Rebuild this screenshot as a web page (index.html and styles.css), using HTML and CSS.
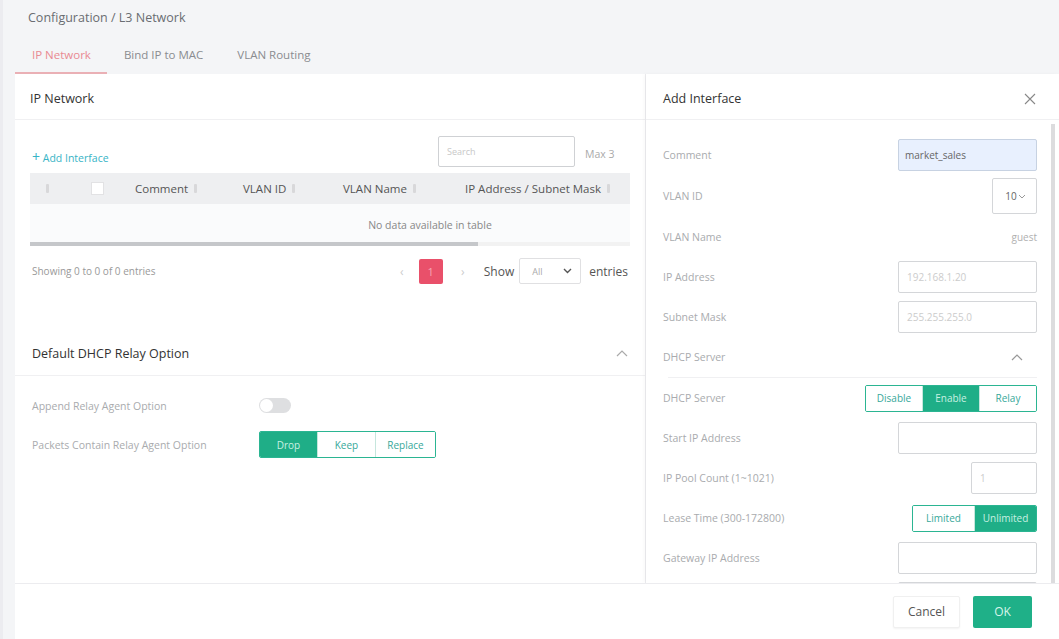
FILE: index.html
```html
<!DOCTYPE html>
<html lang="en">
<head>
    <meta charset="UTF-8">
    <title>Configuration / L3 Network</title>
    <link rel="stylesheet" href="styles.css">
</head>
<body>
    <div class="page">
        <div class="top">
            <div class="crumb">Configuration / L3 Network</div>
            <div class="tabs">
                <span class="tab active">IP Network</span>
                <span class="tab">Bind IP to MAC</span>
                <span class="tab">VLAN Routing</span>
            </div>
        </div>

        <div class="main">
            <div class="card">
                <div class="card-head">IP Network</div>
                <div class="card-body">
                    <div class="toolbar">
                        <a class="add-link"><b>+</b> Add Interface</a>
                        <div class="search-wrap">
                            <input class="search" type="text" placeholder="Search">
                            <span class="max">Max 3</span>
                        </div>
                    </div>

                    <div class="table">
                        <div class="thead">
                            <span class="th th-sort"><i class="sort"></i></span>
                            <span class="th th-check"><i class="check"></i></span>
                            <span class="th th-comment">Comment <i class="sort"></i></span>
                            <span class="th th-id">VLAN ID <i class="sort"></i></span>
                            <span class="th th-name">VLAN Name <i class="sort"></i></span>
                            <span class="th th-ip">IP Address / Subnet Mask <i class="sort"></i></span>
                        </div>
                        <div class="empty">No data available in table</div>
                        <div class="hscroll"><div class="hthumb"></div></div>
                    </div>

                    <div class="table-foot">
                        <span class="info">Showing 0 to 0 of 0 entries</span>
                        <div class="pager">
                            <span class="arrow">‹</span>
                            <span class="page-num">1</span>
                            <span class="arrow next">›</span>
                            <span class="show">Show</span>
                            <span class="select">All <svg width="9" height="6" viewBox="0 0 9 6"><path d="M1 1l3.5 3.5L8 1" fill="none" stroke="#555" stroke-width="1.4"/></svg></span>
                            <span class="show entries">entries</span>
                        </div>
                    </div>
                </div>

                <div class="section-head">
                    <span>Default DHCP Relay Option</span>
                    <svg width="12" height="8" viewBox="0 0 12 8"><path d="M1 7l5-5 5 5" fill="none" stroke="#aaa" stroke-width="1.2"/></svg>
                </div>
                <div class="relay">
                    <div class="relay-row">
                        <span class="lbl">Append Relay Agent Option</span>
                        <span class="toggle"><i></i></span>
                    </div>
                    <div class="relay-row">
                        <span class="lbl">Packets Contain Relay Agent Option</span>
                        <div class="seg seg-wide">
                            <span class="on">Drop</span>
                            <span>Keep</span>
                            <span>Replace</span>
                        </div>
                    </div>
                </div>
            </div>

            <div class="drawer">
                <div class="drawer-head">
                    <span>Add Interface</span>
                    <svg width="12" height="12" viewBox="0 0 12 12"><path d="M1 1l10 10M11 1L1 11" stroke="#888" stroke-width="1.1"/></svg>
                </div>
                <div class="drawer-body">
                    <div class="form">
                        <div class="row">
                            <span class="lbl">Comment</span>
                            <span class="field filled">market_sales</span>
                        </div>
                        <div class="row row-tall">
                            <span class="lbl">VLAN ID</span>
                            <span class="field vlan">10 <svg width="8" height="5" viewBox="0 0 8 5"><path d="M1 1l3 3 3-3" fill="none" stroke="#999" stroke-width="1"/></svg></span>
                        </div>
                        <div class="row">
                            <span class="lbl">VLAN Name</span>
                            <span class="plain">guest</span>
                        </div>
                        <div class="row">
                            <span class="lbl">IP Address</span>
                            <span class="field ph">192.168.1.20</span>
                        </div>
                        <div class="row">
                            <span class="lbl">Subnet Mask</span>
                            <span class="field ph">255.255.255.0</span>
                        </div>
                        <div class="row sub-head">
                            <span class="lbl">DHCP Server</span>
                            <svg width="12" height="8" viewBox="0 0 12 8"><path d="M1 7l5-5 5 5" fill="none" stroke="#999" stroke-width="1.2"/></svg>
                        </div>
                        <div class="row">
                            <span class="lbl">DHCP Server</span>
                            <div class="seg seg-dhcp">
                                <span>Disable</span>
                                <span class="on">Enable</span>
                                <span>Relay</span>
                            </div>
                        </div>
                        <div class="row">
                            <span class="lbl">Start IP Address</span>
                            <span class="field"></span>
                        </div>
                        <div class="row">
                            <span class="lbl">IP Pool Count (1~1021)</span>
                            <span class="field small ph">1</span>
                        </div>
                        <div class="row">
                            <span class="lbl">Lease Time (300-172800)</span>
                            <div class="seg seg-lease">
                                <span>Limited</span>
                                <span class="on">Unlimited</span>
                            </div>
                        </div>
                        <div class="row">
                            <span class="lbl">Gateway IP Address</span>
                            <span class="field"></span>
                        </div>
                        <div class="row">
                            <span></span>
                            <span class="field"></span>
                        </div>
                    </div>
                    <div class="vscroll"></div>
                </div>
            </div>
        </div>

        <div class="footer">
            <button class="btn cancel">Cancel</button>
            <button class="btn ok">OK</button>
        </div>
    </div>
</body>
</html>
```

FILE: styles.css
```css
body {
    margin: 0;
    background-color: #f4f5f7;
    font-family: "Open Sans", "Noto Sans", Arial, sans-serif;
    color: #333;
    width: 1059px;
    height: 639px;
    overflow: hidden;
}
.page {
    padding-left: 15px;
    box-shadow: inset 3px 0 0 #ececf0;
    box-sizing: border-box;
    height: 639px;
    display: flex;
    flex-direction: column;
}
.top {
    height: 74px;
    box-sizing: border-box;
    padding-top: 9px;
}
.crumb {
    font-size: 12.5px;
    line-height: 17px;
    color: #6a6d72;
    padding-left: 13px;
}
.tabs {
    display: flex;
    margin-top: 21px;
}
.tab {
    font-size: 11.5px;
    line-height: 16px;
    color: #8a8c90;
    padding: 0 17px;
    height: 25px;
}
.tab.active {
    color: #e98a92;
    border-bottom: 2px solid #eab0b5;
    padding-left: 17px;
    padding-right: 16px;
}

.main {
    flex: 1;
    display: flex;
    min-height: 0;
}
.card {
    width: 630px;
    background-color: #fff;
    border-right: 1px solid #ececef;
}
.card-head {
    height: 46px;
    box-sizing: border-box;
    padding: 16px 15px 0;
    font-size: 12.5px;
    color: #333;
    border-bottom: 1px solid #f0f0f2;
}
.card-body {
    padding: 15px 15px 0;
}
.toolbar {
    display: flex;
    justify-content: space-between;
    align-items: center;
    height: 32px;
}
.add-link {
    font-size: 10.5px;
    color: #37b4c6;
    padding-left: 2px;
    padding-top: 10px;
}
.add-link b {
    font-weight: normal;
    font-size: 14px;
}
.search-wrap {
    display: flex;
    align-items: center;
}
.search {
    width: 137px;
    height: 31px;
    box-sizing: border-box;
    border: 1px solid #cfd1d4;
    border-radius: 2px;
    font-size: 9px;
    padding: 0 8px;
    font-family: inherit;
}
.search::placeholder { color: #c8c8c8; }
.max {
    font-size: 10.5px;
    color: #aaa;
    margin-left: 10px;
    width: 45px;
    padding-top: 6px;
}
.table {
    margin-top: 6px;
}
.thead {
    display: flex;
    align-items: center;
    height: 31px;
    background-color: #eeeff1;
    font-size: 11.5px;
    color: #555;
}
.th {
    display: flex;
    align-items: center;
    gap: 6px;
}
.th-sort { width: 57px; padding-left: 16px; box-sizing: border-box; }
.th-check { width: 48px; }
.th-comment { width: 108px; }
.th-id { width: 100px; }
.th-name { width: 122px; }
.sort {
    display: inline-block;
    width: 3px;
    height: 9px;
    background-color: #d8d8da;
    border-radius: 1px;
}
.check {
    display: inline-block;
    width: 11px;
    height: 11px;
    background-color: #fff;
    border: 1px solid #e2e2e4;
    margin-left: 4px;
}
.empty {
    height: 38px;
    line-height: 42px;
    background-color: #fafbfc;
    text-align: center;
    font-size: 10.5px;
    color: #888;
    padding-left: 200px;
    box-sizing: border-box;
}
.hscroll {
    height: 4px;
    background-color: #f2f2f2;
}
.hthumb {
    width: 448px;
    height: 4px;
    background-color: #c5c7ca;
}
.table-foot {
    display: flex;
    justify-content: space-between;
    align-items: center;
    margin-top: 12px;
    height: 26px;
}
.info {
    font-size: 10px;
    color: #999;
    padding-left: 2px;
}
.pager {
    display: flex;
    align-items: center;
    font-size: 12px;
    color: #666;
    padding-right: 2px;
}
.arrow {
    color: #ccc;
    width: 20px;
    text-align: center;
    font-size: 12px;
}
.arrow.next { margin-left: 10px; }
.page-num {
    width: 24px;
    height: 25px;
    line-height: 25px;
    text-align: center;
    background-color: #e9506a;
    color: #f7a6b4;
    border-radius: 2px;
    margin-left: 7px;
    font-size: 11px;
}
.show { color: #555; margin-left: 11px; }
.select {
    width: 62px;
    height: 26px;
    box-sizing: border-box;
    border: 1px solid #e0e0e2;
    border-radius: 2px;
    margin-left: 5px;
    display: flex;
    align-items: center;
    justify-content: space-between;
    padding: 0 8px 0 12px;
    color: #aaa;
    font-size: 9px;
}
.show.entries { margin-left: 8px; }
.section-head {
    margin-top: 47px;
    height: 45px;
    box-sizing: border-box;
    border-bottom: 1px solid #f0f0f2;
    display: flex;
    justify-content: space-between;
    align-items: center;
    padding: 0 17px;
    font-size: 12.5px;
    color: #333;
}
.relay {
    padding: 10px 17px 0;
}
.relay-row {
    display: flex;
    align-items: center;
    height: 39px;
}
.relay-row .lbl {
    width: 227px;
}
.lbl {
    font-size: 10.5px;
    color: #a9abae;
}
.toggle {
    width: 32px;
    height: 15px;
    background-color: #dedfe1;
    border-radius: 8px;
    position: relative;
}
.toggle i {
    position: absolute;
    left: 1px;
    top: 1px;
    width: 13px;
    height: 13px;
    border-radius: 50%;
    background-color: #fff;
}
.seg {
    display: flex;
    border: 1px solid #2bb592;
    border-radius: 2px;
    height: 27px;
    box-sizing: border-box;
    font-size: 10px;
    overflow: hidden;
}
.seg span {
    display: flex;
    align-items: center;
    justify-content: center;
    color: #37a89a;
    border-left: 1px solid #c6e6dd;
    background-color: #fff;
}
.seg span:first-child { border-left: none; }
.seg span.on {
    background-color: #1fae87;
    color: #c9f0e2;
}
.seg-wide span { width: 57px; }
.seg-wide span:last-child { width: 59px; }
.seg-dhcp span { width: 56px; }
.seg-lease span { width: 61px; }

.drawer {
    flex: 1;
    background-color: #fff;
    display: flex;
    flex-direction: column;
    box-shadow: -2px 0 4px rgba(0,0,0,0.03);
}
.drawer-head {
    height: 46px;
    box-sizing: border-box;
    padding: 16px 23px 0 17px;
    display: flex;
    justify-content: space-between;
    font-size: 12.5px;
    color: #333;
    border-bottom: 1px solid #f0f0f2;
}
.drawer-head svg { margin-top: 3px; }
.drawer-body {
    flex: 1;
    display: flex;
    overflow: hidden;
    min-height: 0;
}
.form {
    flex: 1;
    padding: 15px 14px 0 17px;
}
.vscroll {
    width: 4px;
    margin: 4px 4px 0 0;
    background-color: #dcdcde;
}
.row {
    display: flex;
    justify-content: space-between;
    align-items: center;
    height: 40px;
}
.row-tall { height: 42px; }
.field {
    width: 139px;
    height: 32px;
    box-sizing: border-box;
    border: 1px solid #d4d6d9;
    border-radius: 2px;
    font-size: 10px;
    color: #555;
    display: flex;
    align-items: center;
    padding: 0 8px;
}
.field.filled {
    background-color: #e8f0fe;
    border-color: #c7d2e2;
    color: #666;
    padding-left: 6px;
}
.field.ph { color: #ccc; }
.field.vlan {
    width: 45px;
    height: 36px;
    justify-content: center;
    gap: 1px;
    color: #666;
    padding: 0 4px 0 6px;
}
.field.small {
    width: 66px;
}
.plain {
    font-size: 10px;
    color: #b0b0b0;
}
.sub-head {
    border-bottom: 1px solid #f0f0f2;
    padding-right: 14px;
    margin-left: 5px;
}
.sub-head .lbl { margin-left: -5px; }

.footer {
    height: 55px;
    flex-shrink: 0;
    background-color: #fff;
    border-top: 1px solid #ececef;
    display: flex;
    justify-content: flex-end;
    align-items: center;
    padding-right: 27px;
    gap: 13px;
}
.btn {
    height: 32px;
    border-radius: 2px;
    font-family: inherit;
    font-size: 12px;
    cursor: pointer;
}
.cancel {
    width: 67px;
    background-color: #fff;
    border: 1px solid #f0f0f0;
    color: #555;
    box-shadow: 0 1px 2px rgba(0,0,0,0.05);
}
.ok {
    width: 59px;
    background-color: #1fb088;
    border: none;
    color: #d8f5ea;
}
```
